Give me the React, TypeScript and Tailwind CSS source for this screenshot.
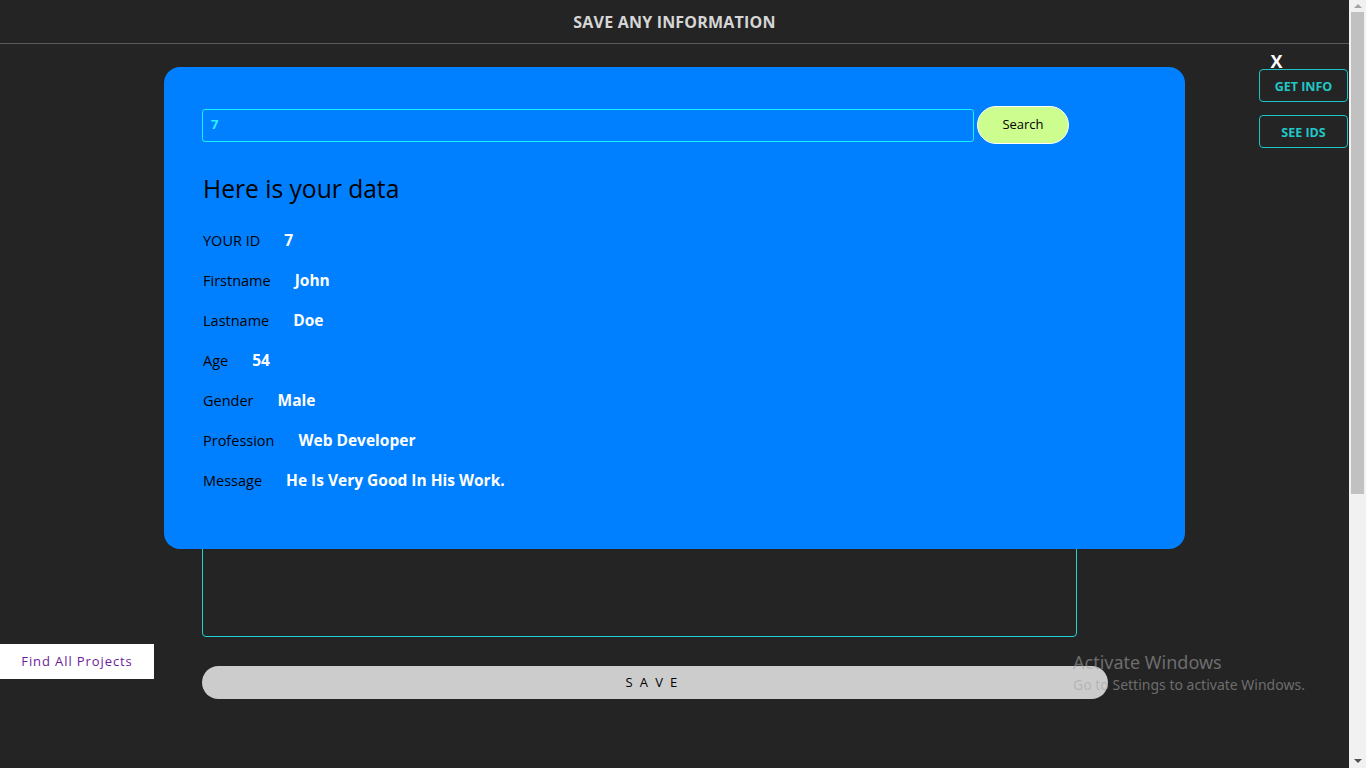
import React from "react"

const rows = [
  { label: "YOUR ID", value: "7" },
  { label: "Firstname", value: "John" },
  { label: "Lastname", value: "Doe" },
  { label: "Age", value: "54" },
  { label: "Gender", value: "Male" },
  { label: "Profession", value: "Web Developer" },
  { label: "Message", value: "He Is Very Good In His Work." },
]

function Scrollbar() {
  return (
    <div className="flex h-full w-[17px] shrink-0 flex-col bg-[#f1f1f1]">
      <div className="flex h-[12px] items-center justify-center">
        <div className="h-0 w-0 border-x-[4px] border-b-[4px] border-x-transparent border-b-[#a3a3a3]" />
      </div>
      <div className="mx-[2px] h-[482px] bg-[#c1c1c1]" />
      <div className="flex-1" />
      <div className="flex h-[14px] items-center justify-center">
        <div className="h-0 w-0 border-x-[4px] border-t-[4px] border-x-transparent border-t-[#505050]" />
      </div>
    </div>
  )
}

export default function App() {
  return (
    <div className="flex h-screen w-full overflow-hidden bg-[#242424] font-['Open_Sans',sans-serif]">
      <div className="relative flex-1">
        {/* Header */}
        <header className="flex h-[44px] items-center justify-center border-b border-[#5a5a5a]">
          <h1 className="text-[16px] font-bold tracking-[0.2px] text-[#d6d6d6]">SAVE ANY INFORMATION</h1>
        </header>

        {/* Form behind the modal */}
        <div className="flex w-[1108px] flex-col pl-[202px] pt-[141px]">
          <div className="flex flex-col gap-6">
            <input className="h-[33px] w-[875px] rounded-sm border border-[#1fd3d3] bg-transparent" />
            <input className="h-[33px] w-[875px] rounded-sm border border-[#1fd3d3] bg-transparent" />
            <input className="h-[33px] w-[875px] rounded-sm border border-[#1fd3d3] bg-transparent" />
            <input className="h-[33px] w-[875px] rounded-sm border border-[#1fd3d3] bg-transparent" />
            <input className="h-[33px] w-[875px] rounded-sm border border-[#1fd3d3] bg-transparent" />
          </div>
          <textarea className="mt-[24px] h-[167px] w-[875px] resize-none rounded-sm border border-[#1fd3d3] bg-transparent" />
          <button className="mt-[29px] h-[33px] w-[906px] rounded-full bg-[#cccccc] text-[13px] tracking-[0.55em] text-black">
            SAVE
          </button>
        </div>

        {/* Modal */}
        <div className="absolute left-[164px] top-[67px] w-[1021px] rounded-2xl bg-[#0080ff] px-[38px] pb-[58px] pt-[39px]">
          <div className="flex items-center">
            <div className="flex h-[33px] w-[772px] items-center rounded-[3px] border border-[#13f2ff] pl-[8px]">
              <span className="text-[13px] font-bold text-[#2af0ff]">7</span>
            </div>
            <button className="ml-[3px] h-[38px] w-[92px] rounded-full border border-white bg-[#cdfc8f] text-[13px] text-black">
              Search
            </button>
          </div>
          <h2 className="mt-[29px] pl-px text-[24.6px] leading-[32px] text-black">Here is your data</h2>
          <div className="mt-[26px] flex flex-col gap-5 pl-px">
            {rows.map((r) => (
              <div key={r.label} className="flex h-5 items-center">
                <span className="text-[14.5px] text-black">{r.label}</span>
                <span className="ml-[24px] text-[15.5px] font-bold text-white">{r.value}</span>
              </div>
            ))}
          </div>
        </div>

        {/* Right side menu */}
        <div className="absolute right-[1px] top-[50px] flex w-[89px] flex-col items-center">
          <span className="-ml-[54px] text-[18px] font-bold leading-[22px] text-white">X</span>
          <button className="mt-[-3px] h-[33px] w-[89px] rounded-[4px] border border-[#1cc4c4] pt-[3px] text-[12.5px] font-bold text-[#22c7c7]">
            GET INFO
          </button>
          <button className="mt-[13px] h-[33px] w-[89px] rounded-[4px] border border-[#1cc4c4] pt-[3px] text-[12.5px] font-bold text-[#22c7c7]">
            SEE IDS
          </button>
        </div>

        {/* Find all projects */}
        <div className="absolute left-0 top-[644px] flex h-[35px] w-[154px] items-center justify-center bg-white">
          <span className="text-[13px] tracking-[0.9px] text-[#6d1b9c]">Find All Projects</span>
        </div>

        {/* Windows watermark */}
        <div className="absolute left-[1073px] top-[649px] flex flex-col font-['Noto_Sans',sans-serif] text-[rgba(164,164,164,0.58)]">
          <span className="text-[18px] leading-[26px]">Activate Windows</span>
          <span className="text-[14px] leading-[20px]">Go to Settings to activate Windows.</span>
        </div>
      </div>
      <Scrollbar />
    </div>
  )
}
